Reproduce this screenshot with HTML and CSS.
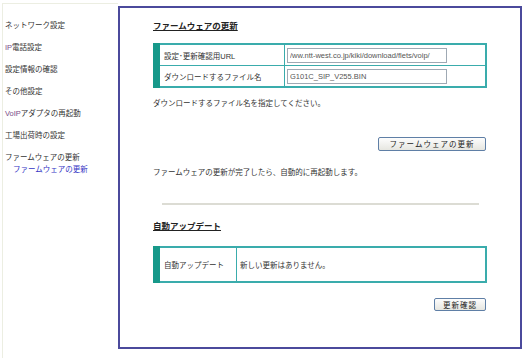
FILE: index.html
```html
<!DOCTYPE html>
<html lang="ja">
<head>
    <meta charset="UTF-8">
    <title>ファームウェアの更新</title>
    <link rel="stylesheet" href="styles.css">
</head>
<body>
    <div class="page">
        <ul class="menu">
            <li>ネットワーク設定</li>
            <li><span class="en">IP</span>電話設定</li>
            <li>設定情報の確認</li>
            <li>その他設定</li>
            <li><span class="en">VoIP</span>アダプタの再起動</li>
            <li>工場出荷時の設定</li>
            <li class="open">ファームウェアの更新
                <a class="sub">ファームウェアの更新</a>
            </li>
        </ul>

        <div class="main">
            <h2 class="title first">ファームウェアの更新</h2>
            <table class="form">
                <tr>
                    <td class="label">設定･更新確認用URL</td>
                    <td class="value"><input type="text" class="field" value="/ww.ntt-west.co.jp/kiki/download/flets/voip/"></td>
                </tr>
                <tr>
                    <td class="label">ダウンロードするファイル名</td>
                    <td class="value"><input type="text" class="field" value="G101C_SIP_V255.BIN"></td>
                </tr>
            </table>
            <p class="note">ダウンロードするファイル名を指定してください。</p>
            <div class="actions">
                <button class="btn wide">ファームウェアの更新</button>
            </div>
            <p class="note after">ファームウェアの更新が完了したら、自動的に再起動します。</p>
            <hr class="sep">

            <h2 class="title">自動アップデート</h2>
            <table class="form auto">
                <tr>
                    <td class="label">自動アップデート</td>
                    <td class="value">新しい更新はありません。</td>
                </tr>
            </table>
            <div class="actions small">
                <button class="btn">更新確認</button>
            </div>
        </div>
    </div>
</body>
</html>
```

FILE: styles.css
```css
/* page frame */
body {
    margin: 0;
    background-color: #fff;
    font-family: 'Liberation Sans', 'Noto Sans CJK JP', sans-serif;
    font-size: 7.5px;
    color: #333;
}

.page {
    display: flex;
    align-items: flex-start;
    height: 358px;
}

/* left menu */
.menu {
    list-style: none;
    width: 116px;
    height: 355px;
    margin: 3px 0 0 2px;
    padding: 11px 0 0 2px;
    border-top: 1px solid #eceee2;
    border-left: 1px solid #eceee2;
    box-sizing: border-box;
}

.menu li {
    line-height: 22px;
    white-space: nowrap;
}

.menu .en {
    color: #7a4a86;
}

.menu li.open {
    line-height: 12px;
    padding-top: 5px;
}

.menu .sub {
    display: block;
    padding-left: 8px;
    line-height: 11px;
    color: #3434c4;
}

/* main panel */
.main {
    width: 404px;
    height: 343px;
    margin-top: 6px;
    padding: 0 33px;
    border: 2px solid #4b4a9c;
    box-sizing: border-box;
}

.title {
    margin: 15px 0 0;
    font-size: 8.5px;
    line-height: 12px;
    font-weight: bold;
    color: #222;
    text-decoration: underline;
}

.title.first {
    margin-top: 12px;
}

.form {
    width: 100%;
    margin-top: 11px;
    border-collapse: collapse;
    border: 2px solid #3aacac;
    border-left: 7px solid #17998a;
}

.form td {
    height: 20px;
    padding: 0;
    border: 1px solid #3aacac;
    white-space: nowrap;
}

.form .label {
    width: 120px;
    padding-left: 4px;
}

.form .value {
    padding-left: 2px;
}

.form.auto {
    margin-top: 14px;
}

.form.auto td {
    height: 33px;
}

.form.auto .label {
    width: 72px;
}

.form.auto .value {
    padding-left: 3px;
}

.field {
    width: 160px;
    height: 15px;
    margin: 0;
    padding: 0 2px;
    border: 1px solid #9fa9b4;
    box-sizing: border-box;
    font-family: 'Liberation Sans', sans-serif;
    font-size: 7.5px;
    color: #555;
}

.note {
    margin: 10px 0 0;
    line-height: 12px;
}

.note.after {
    margin-top: 16px;
}

.actions {
    display: flex;
    justify-content: flex-end;
    margin-top: 27px;
    padding-right: 1px;
}

.actions.small {
    margin-top: 15px;
}

.btn {
    width: 108px;
    height: 14px;
    padding: 0;
    border: 1px solid #5f7fa6;
    border-radius: 2px;
    background: linear-gradient(#fdfdfd, #e6e6e0);
    font-family: 'Noto Sans CJK JP', sans-serif;
    font-size: 7.5px;
    line-height: 12px;
    color: #222;
    letter-spacing: 1px;
}

.actions.small .btn {
    width: 52px;
    height: 13px;
}

.sep {
    height: 2px;
    margin: 24px 8px 0 9px;
    border: none;
    background-color: #dcdcd4;
}
```
